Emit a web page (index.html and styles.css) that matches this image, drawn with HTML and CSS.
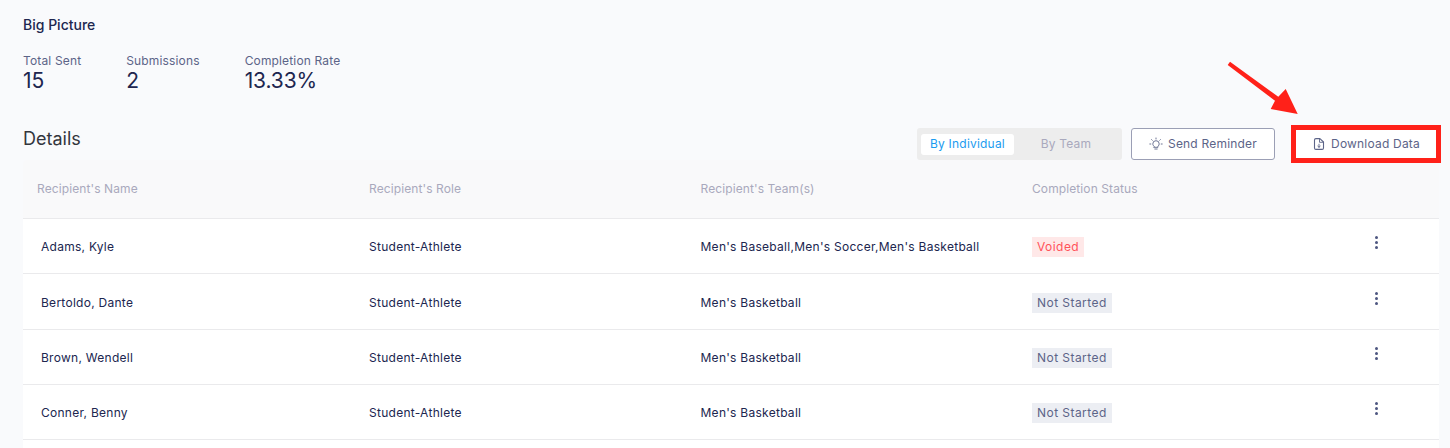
FILE: index.html
```html
<!DOCTYPE html>
<html lang="en">
<head>
    <meta charset="UTF-8">
    <title>Big Picture</title>
    <link rel="stylesheet" href="styles.css">
</head>
<body>
    <div class="container">
        <h2 class="section-title">Big Picture</h2>
        <div class="stats">
            <div class="stat"><span class="stat-label">Total Sent</span><span class="stat-value">15</span></div>
            <div class="stat"><span class="stat-label">Submissions</span><span class="stat-value">2</span></div>
            <div class="stat"><span class="stat-label">Completion Rate</span><span class="stat-value">13.33%</span></div>
        </div>
        <div class="details-header">
            <h2 class="details-title">Details</h2>
            <div class="actions">
                <div class="toggle">
                    <span class="toggle-item active">By Individual</span>
                    <span class="toggle-item">By Team</span>
                </div>
                <button class="btn btn-outline">
                    <svg class="icon" viewBox="0 0 14 14" fill="none" stroke="currentColor" stroke-width="0.9" stroke-linecap="round">
                        <path d="M5 9.2C4.2 8.6 3.8 7.8 3.8 6.9a3.2 3.2 0 0 1 6.4 0c0 .9-.4 1.7-1.2 2.3v1.1H5z"/>
                        <path d="M5.8 12h2.4"/>
                        <path d="M7 1v1M2.6 2.6l.7.7M11.4 2.6l-.7.7M.8 7h1M12.2 7h1"/>
                    </svg>
                    Send Reminder
                </button>
                <button class="btn btn-download">
                    <svg class="icon" viewBox="0 0 14 14" fill="none" stroke="currentColor" stroke-width="1.1" stroke-linejoin="round" stroke-linecap="round">
                        <path d="M2.500 3c0-.8.6-1.400 1.400-1.400h4L11.500 5v6c0 .8-.6 1.400-1.400 1.400H3.900c-.8 0-1.400-.6-1.400-1.400z"/>
                        <path d="M7.500 1.800v3.500h3.700" stroke-width="0.9"/>
                        <path d="M7 7.200v3M5.800 9.200 7 10.300l1.200-1.100" stroke-width="0.9"/>
                    </svg>
                    Download Data
                </button>
            </div>
        </div>
        <div class="table">
            <div class="row head">
                <div>Recipient's Name</div>
                <div>Recipient's Role</div>
                <div>Recipient's Team(s)</div>
                <div>Completion Status</div>
            </div>
            <div class="row body-row">
                <div class="name">Adams, Kyle</div>
                <div>Student-Athlete</div>
                <div>Men's Baseball,Men's Soccer,Men's Basketball</div>
                <div><span class="badge voided">Voided</span></div>
                <div class="more"><i></i><i></i><i></i></div>
            </div>
            <div class="row body-row">
                <div class="name">Bertoldo, Dante</div>
                <div>Student-Athlete</div>
                <div>Men's Basketball</div>
                <div><span class="badge">Not Started</span></div>
                <div class="more"><i></i><i></i><i></i></div>
            </div>
            <div class="row body-row">
                <div class="name">Brown, Wendell</div>
                <div>Student-Athlete</div>
                <div>Men's Basketball</div>
                <div><span class="badge">Not Started</span></div>
                <div class="more"><i></i><i></i><i></i></div>
            </div>
            <div class="row body-row">
                <div class="name">Conner, Benny</div>
                <div>Student-Athlete</div>
                <div>Men's Basketball</div>
                <div><span class="badge">Not Started</span></div>
                <div class="more"><i></i><i></i><i></i></div>
            </div>
            <div class="row body-row cut-row"></div>
        </div>
    </div>
    <svg class="arrow" viewBox="0 0 80 70" fill="#ff2119">
        <path d="M10 6.700 58.300 41.700 65.700 34 77.700 59 50.700 54 55 45.700 7.700 10Z"/>
    </svg>
</body>
</html>
```

FILE: styles.css
```css
html, body {
    margin: 0;
    padding: 0;
    height: 448px;
    overflow: hidden;
}

body {
    position: relative;
    background-color: #f9fafc;
    font-family: 'Inter', 'Liberation Sans', sans-serif;
    color: #20264f;
}

.container {
    padding: 16px 11px 0 23px;
}

.section-title {
    margin: 0;
    font-size: 14px;
    line-height: 18px;
    font-weight: 500;
}

.stats {
    display: flex;
    gap: 45px;
    margin-top: 20px;
}

.stat {
    display: flex;
    flex-direction: column;
}

.stat-label {
    font-size: 12px;
    line-height: 14px;
    letter-spacing: 0.15px;
    color: #5c6488;
}

.stat-value {
    font-size: 21px;
    line-height: 26px;
    letter-spacing: -0.1px;
}

.details-header {
    display: flex;
    justify-content: space-between;
    align-items: flex-start;
    margin-top: 27px;
}

.details-title {
    margin: 7px 0 0;
    font-size: 18px;
    line-height: 22px;
    font-weight: 400;
    color: #33353d;
}

.actions {
    position: relative;
    z-index: 1;
    display: flex;
    align-items: center;
    gap: 9px;
    margin-top: 4px;
}

.toggle {
    display: flex;
    align-items: center;
    width: 205px;
    height: 32px;
    padding: 0 4px;
    box-sizing: border-box;
    border-radius: 3px;
    background-color: #ededed;
    font-size: 12px;
    letter-spacing: 0.2px;
}

.toggle-item {
    flex: 1;
    padding-bottom: 1px;
    line-height: 20px;
    text-align: center;
    color: #a9a9bd;
}

.toggle-item.active {
    flex: 0 0 93px;
    border-radius: 3px;
    background-color: #fff;
    color: #1b9cf0;
}

.btn {
    display: flex;
    align-items: center;
    justify-content: center;
    gap: 5px;
    box-sizing: border-box;
    background-color: #fff;
    font-family: inherit;
    font-size: 12px;
    letter-spacing: 0.2px;
    color: #5c6488;
}

.btn-outline {
    width: 144px;
    height: 32px;
    padding: 0 0 1px;
    border: 1px solid #9b9fb5;
    border-radius: 3px;
}

.btn-download {
    width: 150px;
    height: 38px;
    margin-left: 7px;
    margin-right: -2px;
    padding: 0 0 1px;
    border: 5px solid #ff2119;
}

.icon {
    width: 14px;
    height: 14px;
}

/* header band starts just under the buttons row */
.table {
    margin-top: -3px;
}

.row {
    display: grid;
    grid-template-columns: 346px 331.500px 331.500px 1fr 60px;
    align-items: center;
    font-size: 12px;
    letter-spacing: 0.27px;
}

.head {
    height: 58px;
    box-sizing: border-box;
    padding: 8px 0 10px;
    border-radius: 4px 4px 0 0;
    background-color: #f9f9fa;
    letter-spacing: 0.1px;
    color: #a9a9bd;
}

.head div:first-child {
    padding-left: 14px;
}

.body-row {
    height: 55.300px;
    box-sizing: border-box;
    padding-top: 1.600px;
    border-top: 1px solid #eaeaec;
    background-color: #fff;
}

.body-row.cut-row {
    height: 8.800px;
    padding-top: 0;
}

.name {
    padding-left: 18px;
}

.badge {
    display: inline-block;
    margin-top: 1px;
    padding: 0 5px;
    line-height: 20px;
    letter-spacing: 0.45px;
    background-color: #eceef3;
    color: #5c6488;
}

.badge.voided {
    background-color: #ffe8e8;
    color: #ff525a;
}

.more {
    display: flex;
    flex-direction: column;
    align-items: center;
    gap: 2px;
    width: 8px;
    margin: -8px 0 0 -7px;
}

.more i {
    width: 3px;
    height: 3px;
    border-radius: 50%;
    background-color: #4d5680;
}

/* annotation drawn over the screenshot */
.arrow {
    position: absolute;
    left: 1220px;
    top: 55px;
    width: 80px;
    height: 70px;
}
```
